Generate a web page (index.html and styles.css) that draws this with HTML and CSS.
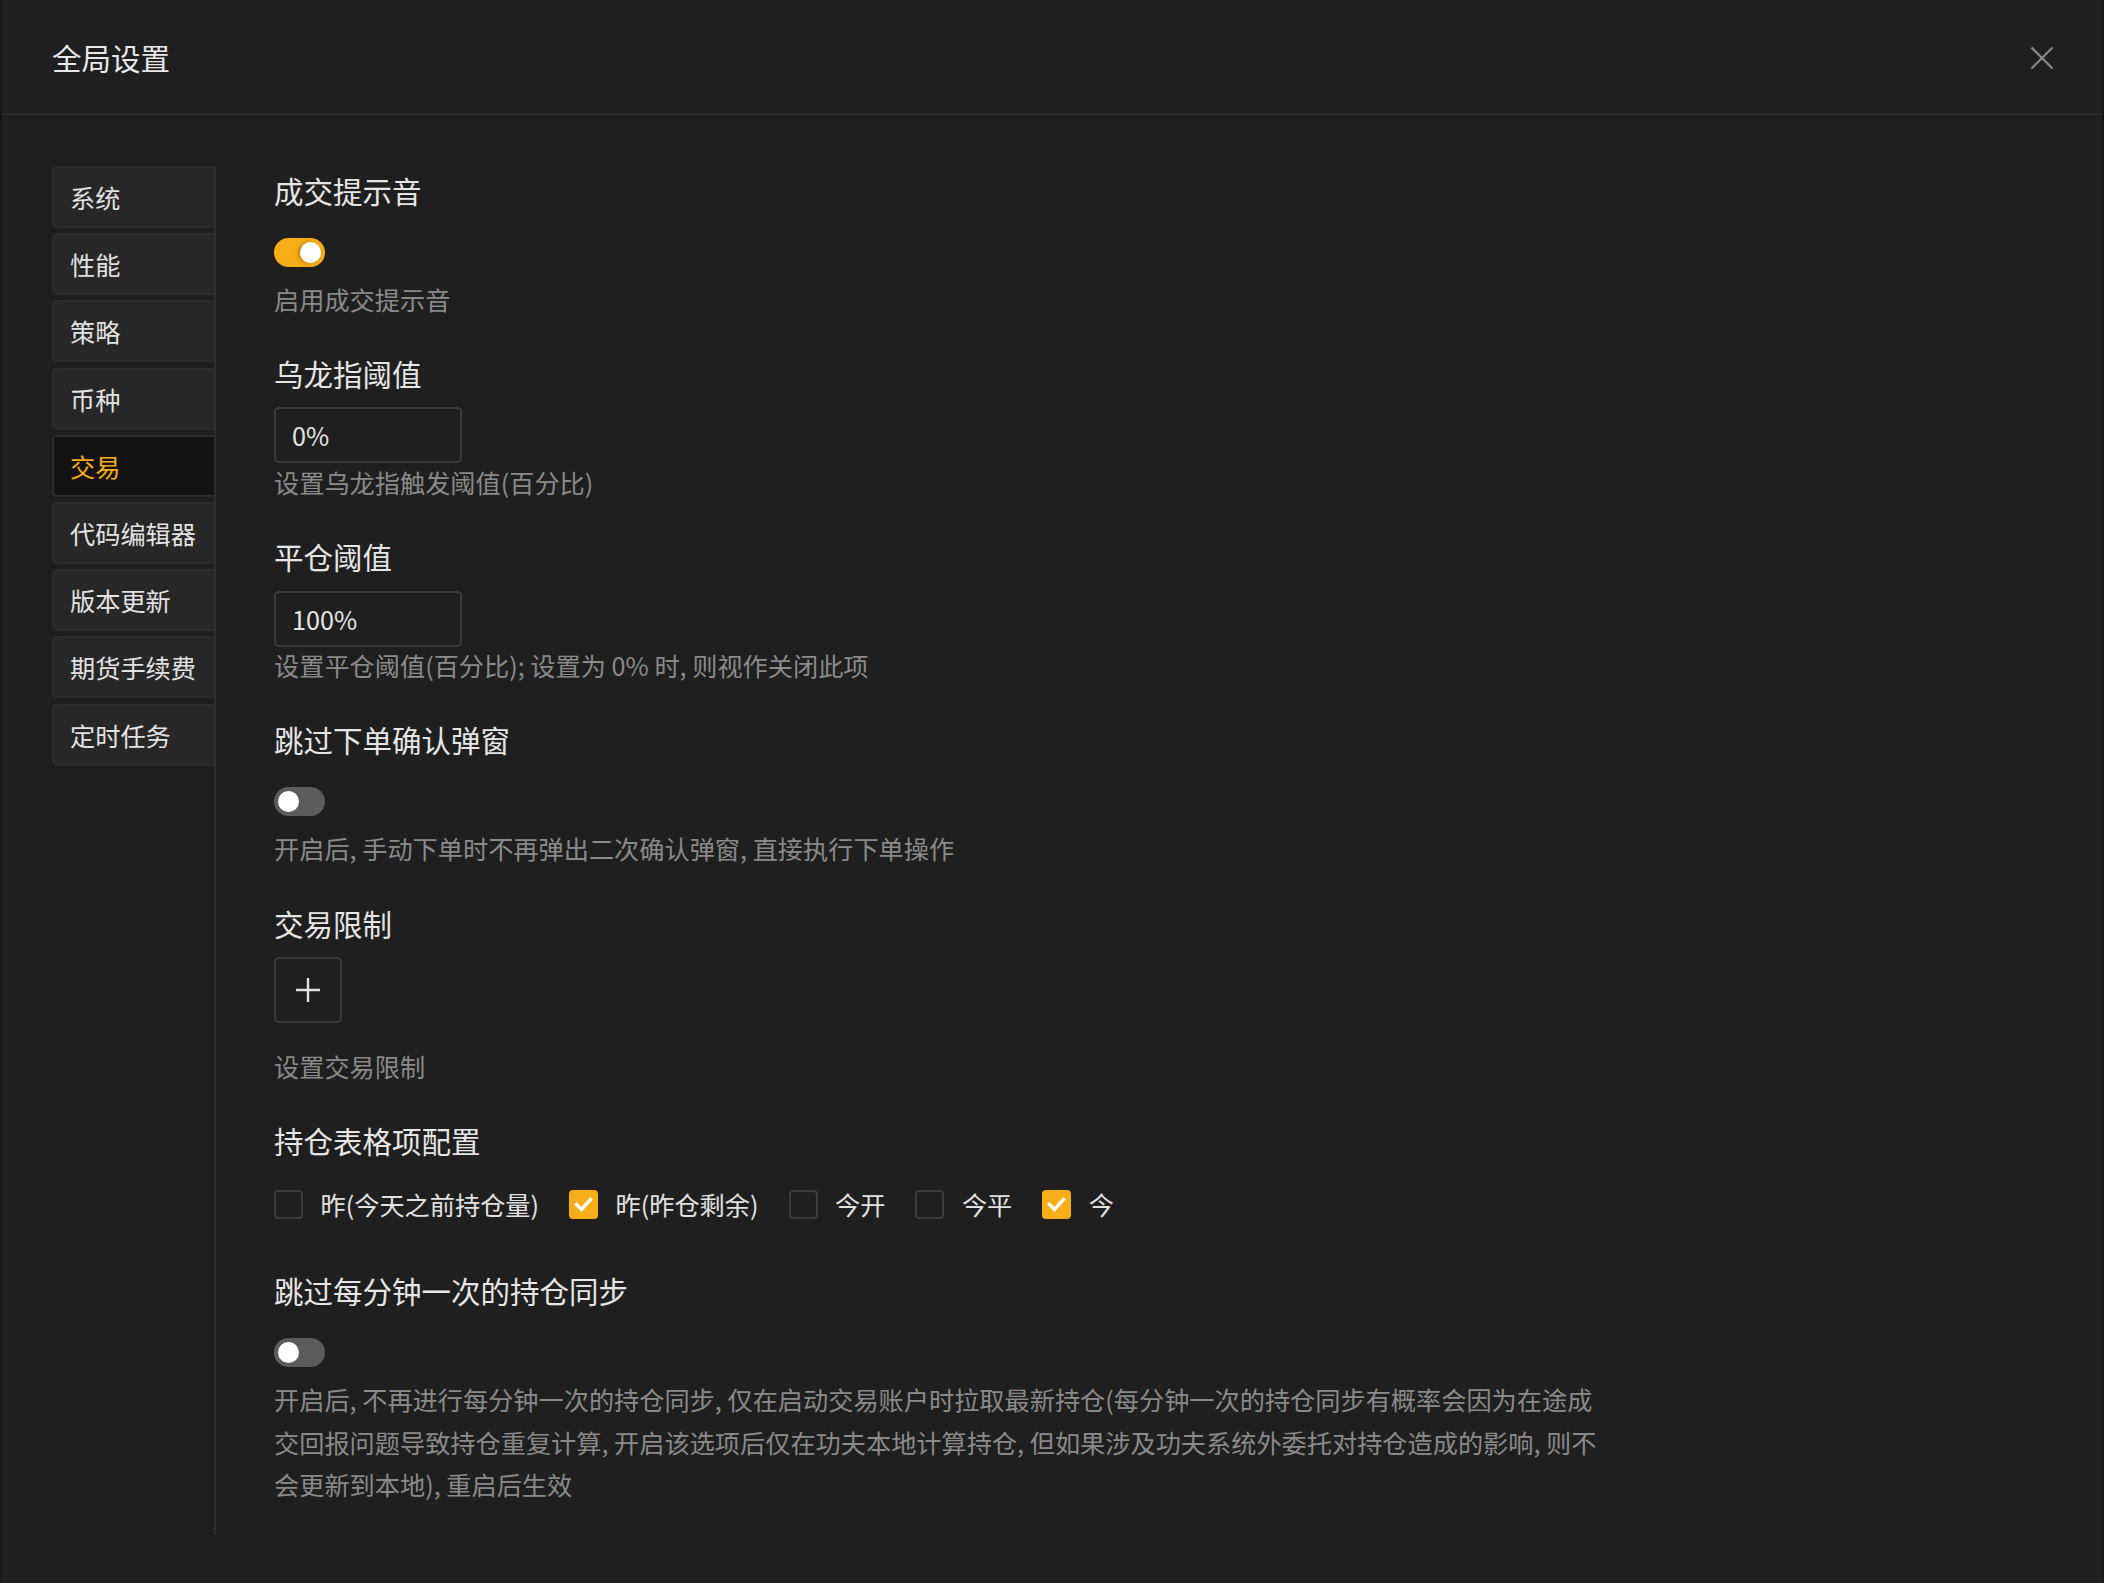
FILE: index.html
```html
<!DOCTYPE html>
<html lang="zh-CN">
<head>
<meta charset="utf-8">
<title>全局设置</title>
<link rel="stylesheet" href="styles.css">
</head>
<body>
<div class="modal">
  <header class="modal-header">
    <div class="modal-title">全局设置</div>
    <button class="close-btn" aria-label="关闭">
      <svg width="24" height="24" viewBox="0 0 24 24"><path d="M1.5 1.5 L22.5 22.5 M22.5 1.5 L1.5 22.5" stroke="#8a8a8a" stroke-width="2.2" fill="none"/></svg>
    </button>
  </header>
  <div class="modal-body">
    <nav class="sidebar">
      <div class="nav-item">系统</div>
      <div class="nav-item">性能</div>
      <div class="nav-item">策略</div>
      <div class="nav-item">币种</div>
      <div class="nav-item active">交易</div>
      <div class="nav-item">代码编辑器</div>
      <div class="nav-item">版本更新</div>
      <div class="nav-item">期货手续费</div>
      <div class="nav-item">定时任务</div>
    </nav>
    <main class="content">
      <section class="setting">
        <div class="setting-title">成交提示音</div>
        <div class="control"><span class="switch on"><span class="knob"></span></span></div>
        <div class="desc">启用成交提示音</div>
      </section>
      <section class="setting">
        <div class="setting-title">乌龙指阈值</div>
        <div class="control"><div class="input">0%</div></div>
        <div class="desc">设置乌龙指触发阈值(百分比)</div>
      </section>
      <section class="setting">
        <div class="setting-title">平仓阈值</div>
        <div class="control"><div class="input">100%</div></div>
        <div class="desc">设置平仓阈值(百分比); 设置为 0% 时, 则视作关闭此项</div>
      </section>
      <section class="setting">
        <div class="setting-title">跳过下单确认弹窗</div>
        <div class="control"><span class="switch"><span class="knob"></span></span></div>
        <div class="desc">开启后, 手动下单时不再弹出二次确认弹窗, 直接执行下单操作</div>
      </section>
      <section class="setting">
        <div class="setting-title">交易限制</div>
        <div class="control">
          <div class="add-btn">
            <svg width="26" height="26" viewBox="0 0 26 26"><path d="M13 1 V25 M1 13 H25" stroke="#e2e2e2" stroke-width="2.4" fill="none"/></svg>
          </div>
        </div>
        <div class="desc">设置交易限制</div>
      </section>
      <section class="setting setting-checks">
        <div class="setting-title">持仓表格项配置</div>
        <div class="control checks">
          <label class="check"><span class="box"></span><span class="check-label">昨(今天之前持仓量)</span></label>
          <label class="check"><span class="box checked"><svg width="21" height="21" viewBox="0 0 21 21"><path d="M3.5 10.5 L8.5 15.5 L17.5 5.5" stroke="#fff" stroke-width="3.4" fill="none" stroke-linecap="square"/></svg></span><span class="check-label">昨(昨仓剩余)</span></label>
          <label class="check"><span class="box"></span><span class="check-label">今开</span></label>
          <label class="check"><span class="box"></span><span class="check-label">今平</span></label>
          <label class="check"><span class="box checked"><svg width="21" height="21" viewBox="0 0 21 21"><path d="M3.5 10.5 L8.5 15.5 L17.5 5.5" stroke="#fff" stroke-width="3.4" fill="none" stroke-linecap="square"/></svg></span><span class="check-label">今</span></label>
        </div>
      </section>
      <section class="setting last">
        <div class="setting-title">跳过每分钟一次的持仓同步</div>
        <div class="control"><span class="switch"><span class="knob"></span></span></div>
        <div class="desc long">开启后, 不再进行每分钟一次的持仓同步, 仅在启动交易账户时拉取最新持仓(每分钟一次的持仓同步有概率会因为在途成交回报问题导致持仓重复计算, 开启该选项后仅在功夫本地计算持仓, 但如果涉及功夫系统外委托对持仓造成的影响, 则不会更新到本地), 重启后生效</div>
      </section>
    </main>
  </div>
</div>
</body>
</html>
```

FILE: styles.css
```css
* { box-sizing: border-box; }
html, body {
  margin: 0;
  padding: 0;
  background: #1f1f1f;
}
body {
  font-family: "Noto Sans CJK SC", "Noto Sans", sans-serif;
  color: #e4e4e4;
}
.modal {
  width: 2104px;
  min-height: 1583px;
  background: #1f1f1f;
  border-left: 2px solid #161616;
  border-right: 2px solid #161616;
}
.modal-header {
  height: 115px;
  border-bottom: 2px solid #2c2c2c;
  display: flex;
  align-items: center;
  justify-content: space-between;
  padding: 0 48px 0 50px;
}
.modal-title {
  font-size: 29.5px;
  line-height: 42px;
  color: #e8e8e8;
}
.close-btn {
  background: none;
  border: 0;
  padding: 0;
  width: 24px;
  height: 24px;
  display: flex;
  margin-top: 3px;
}
.modal-body {
  display: flex;
  align-items: stretch;
  padding: 51px 0 0 50px;
}
.sidebar {
  width: 164px;
  flex: none;
  border-right: 2px solid #2e2e2e;
  overflow: hidden;
}
.nav-item {
  height: 62px;
  margin-bottom: 5.2px;
  width: 170px;
  background: #272727;
  border: 2px solid #2c2c2c;
  border-radius: 5px;
  padding-left: 16px;
  font-size: 25.2px;
  line-height: 58px;
  color: #e2e2e2;
  white-space: nowrap;
}
.nav-item.active {
  background: #131313;
  border-color: #2c2c2c;
  color: #f7ab1b;
}
.content {
  flex: 1;
  padding: 2.5px 0 29px 58px;
}
.setting {
  margin-bottom: 32px;
}
.setting.last { margin-bottom: 0; }
.setting-checks { margin-bottom: 35px; }
.setting-title {
  font-size: 29.5px;
  line-height: 42px;
  color: #e6e6e6;
  margin-bottom: 13.5px;
}
.control {
  min-height: 56px;
  display: flex;
  align-items: center;
}
.desc {
  font-size: 25.2px;
  line-height: 42.3px;
  color: #8a8a8a;
  margin-top: -2.5px;
}
.desc.long { max-width: 1330px; }
.switch {
  width: 51px;
  height: 29px;
  border-radius: 15px;
  background: #5c5c5c;
  position: relative;
  display: block;
}
.switch .knob {
  position: absolute;
  top: 4px;
  left: 4px;
  width: 21px;
  height: 21px;
  border-radius: 50%;
  background: #ffffff;
}
.switch.on { background: #f8ae18; }
.switch.on .knob {
  left: 26px;
  box-shadow: -2px 0 4px rgba(120, 70, 0, 0.45);
}
.input {
  width: 188px;
  height: 56px;
  border: 2px solid #3b3b3b;
  border-radius: 5px;
  padding-left: 16px;
  font-size: 25.2px;
  line-height: 52px;
  color: #e6e6e6;
}
.add-btn {
  width: 68px;
  height: 66px;
  border: 2px solid #3b3b3b;
  border-radius: 5px;
  display: flex;
  align-items: center;
  justify-content: center;
  margin-bottom: 24px;
}
.checks {
  min-height: 60px;
}
.check {
  display: flex;
  align-items: center;
  margin-right: 30px;
}
.box {
  width: 29px;
  height: 29px;
  border: 2px solid #3c3c3c;
  border-radius: 4px;
  display: flex;
  align-items: center;
  justify-content: center;
}
.box.checked {
  background: #f8ae18;
  border-color: #f8ae18;
}
.check-label {
  margin-left: 17.5px;
  font-size: 25.2px;
  line-height: 42px;
  color: #e2e2e2;
}
```
